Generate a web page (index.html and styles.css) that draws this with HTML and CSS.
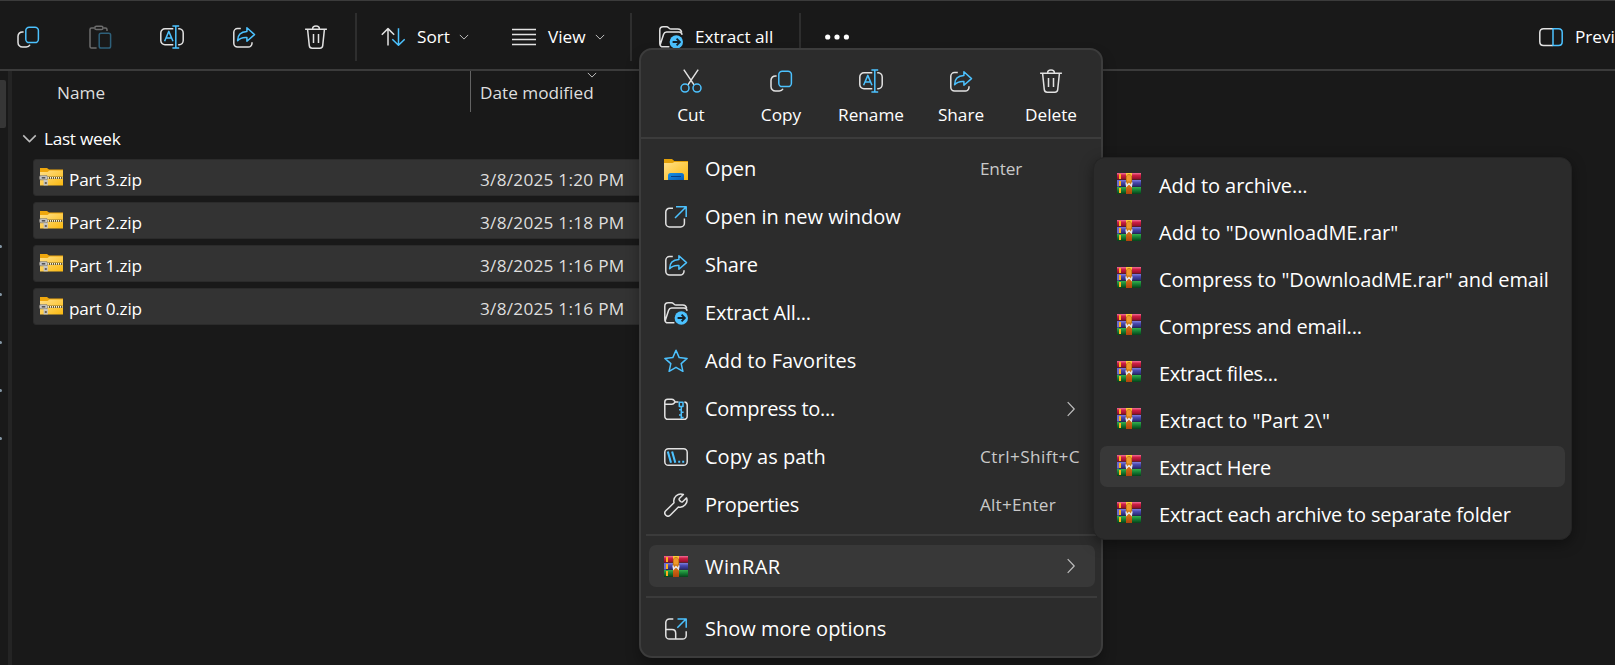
FILE: index.html
```
<!DOCTYPE html>
<html lang="en">
<head>
<meta charset="utf-8">
<title>File Explorer</title>
<link rel="stylesheet" href="styles.css">
</head>
<body>
<svg class="defs" aria-hidden="true">
  <defs>
    <linearGradient id="gYellow" x1="0" y1="0" x2="1" y2="1"><stop offset="0" stop-color="#ffe08a"/><stop offset="1" stop-color="#fbb90f"/></linearGradient>
    <linearGradient id="gBlue" x1="0" y1="0" x2="1" y2="1"><stop offset="0" stop-color="#1590e6"/><stop offset="1" stop-color="#0a5cb8"/></linearGradient>
    <linearGradient id="gRed" x1="0" y1="0" x2="0" y2="1"><stop offset="0" stop-color="#f0709a"/><stop offset=".35" stop-color="#cf1f45"/><stop offset="1" stop-color="#8a0c28"/></linearGradient>
    <linearGradient id="gPurple" x1="0" y1="0" x2="0" y2="1"><stop offset="0" stop-color="#7f7fe0"/><stop offset=".4" stop-color="#4848ac"/><stop offset="1" stop-color="#26266c"/></linearGradient>
    <linearGradient id="gGreen" x1="0" y1="0" x2="0" y2="1"><stop offset="0" stop-color="#35b04c"/><stop offset=".45" stop-color="#168034"/><stop offset="1" stop-color="#07401a"/></linearGradient>
    <linearGradient id="gStrap" x1="0" y1="0" x2="0" y2="1"><stop offset="0" stop-color="#ffcf3a"/><stop offset=".45" stop-color="#e0801a"/><stop offset="1" stop-color="#b0440c"/></linearGradient>
  </defs>
  <symbol id="copy" viewBox="0 0 24 24">
    <path class="w" d="M7.6 6.9H6.5A4.4 4.4 0 0 0 2 11.3V17.5A4.4 4.4 0 0 0 6.5 22H10.2C12 22 13.3 21.3 14 19.8"/>
    <rect class="b" x="9.8" y="2.2" width="12.6" height="15.4" rx="3.4"/>
  </symbol>
  <symbol id="paste" viewBox="0 0 24 24">
    <path class="w" d="M6.4 3H3.5Q2 3 2 4.6V21.4Q2 23 3.6 23H8.6M15.4 3H17.4Q19 3 19 4.6V6"/>
    <rect class="w" x="6.8" y="1.3" width="8.2" height="3.3" rx="1.6"/>
    <rect class="b" x="11.2" y="8.2" width="11.4" height="14.8" rx="1.8"/>
  </symbol>
  <symbol id="rename" viewBox="0 0 24 24">
    <path class="w" d="M13.3 3.7H5A4.2 4.2 0 0 0 .8 7.9V15.5A4.2 4.2 0 0 0 5 19.7H13.3M18.2 3.7H19.2A4.2 4.2 0 0 1 23.2 7.9V15.5A4.2 4.2 0 0 1 19.2 19.7H18.2"/>
    <path class="b" d="M4.6 16.2L8.8 6.4L13 16.2M6 12.9H11.6M15.8 1V23M12.4 .9H19.2M12.4 23.1H19.2"/>
  </symbol>
  <symbol id="share" viewBox="0 0 24 24">
    <path class="w" d="M8.8 3.6H5.5A3.7 3.7 0 0 0 1.8 7.3V18.3A3.7 3.7 0 0 0 5.5 22H16.2A3.7 3.7 0 0 0 20 18.3V17.2"/>
    <path class="b" d="M14.9 2.8V6.6C9 6.8 5.6 10.1 5.6 15.8C8 12.9 11 12.2 14.9 12.5V16.3L22.5 9.6Z"/>
  </symbol>
  <symbol id="trash" viewBox="0 0 24 24">
    <path class="w" d="M1.1 4.3H22.9M8.6 4C8.6 2 10 1 12 1S15.4 2 15.4 4M3.6 4.5L5.3 20.7Q5.6 23.2 8.1 23.2H15.9Q18.4 23.2 18.7 20.7L20.4 4.5M9.5 9V18M14.5 9V18"/>
  </symbol>
  <symbol id="cut" viewBox="0 0 24 24">
    <path class="w" d="M4.8 .6L15.1 15.8M19.2 .6L8.9 15.8"/>
    <circle class="b" cx="6" cy="19.1" r="4"/><circle class="b" cx="18" cy="19.1" r="4"/>
  </symbol>
  <symbol id="sort" viewBox="0 0 24 24">
    <path class="w" d="M7 20.5V3.6M.8 9.8L7 3.6L13.2 9.8"/>
    <path class="b" d="M17.5 3.3V20.2M11.3 14.2L17.5 20.3L23.7 14.2"/>
  </symbol>
  <symbol id="view" viewBox="0 0 24 24"><path class="w" d="M0 4.5H24M0 9.5H24M0 14.5H24M0 19.5H24"/></symbol>
  <symbol id="extract" viewBox="0 0 24 24">
    <path class="w" d="M10.4 21.8H4.2Q.8 21.8 .8 18.4V5.2Q.8 1.8 4.2 1.8H7.5C9.7 1.8 10 4 12 4H18.8Q22 4 22.7 7.4M1.2 19.8L4.6 9.2Q5.3 7 7.6 7H20Q22.3 7 23.2 9.8"/>
    <circle cx="17.3" cy="17" r="6.7" fill="#4cc2ff"/>
    <path d="M13.6 17H20.8M17.6 13.7L20.9 17L17.6 20.3" fill="none" stroke="#16222b" stroke-width="1.8"/>
  </symbol>
  <symbol id="preview" viewBox="0 0 24 24">
    <path class="w" d="M14 3.8H4.6Q.8 3.8 .8 7.6V16.7Q.8 20.5 4.6 20.5H14"/>
    <path class="b" d="M14 3.8H19.4Q23.2 3.8 23.2 7.6V16.7Q23.2 20.5 19.4 20.5H14Z"/>
  </symbol>
  <symbol id="dots" viewBox="0 0 24 24"><g fill="#fff"><circle cx="2.7" cy="12" r="2.6"/><circle cx="12" cy="12" r="2.6"/><circle cx="21.4" cy="12" r="2.6"/></g></symbol>
  <symbol id="folder" viewBox="0 0 24 24">
    <path d="M0 2H8L10.3 4H24V10H0Z" fill="#e3a008"/>
    <path d="M0 6H8.5L10.5 5H24V23H0Z" fill="url(#gYellow)"/>
    <path d="M4 23V18.5Q4 16 6.5 16H17.5Q20 16 20 18.5V23Z" fill="url(#gBlue)"/>
    <path d="M7 19.5H17" stroke="#083f86"/>
  </symbol>
  <symbol id="window" viewBox="0 0 24 24">
    <path class="w" d="M9 3.3H5.5A3.7 3.7 0 0 0 1.8 7V18.2A3.7 3.7 0 0 0 5.5 21.9H16.7A3.7 3.7 0 0 0 20.4 18.2V13.5"/>
    <path class="b" d="M11 13L22 2M12 1.8H22.2V12"/>
  </symbol>
  <symbol id="more" viewBox="0 0 24 24">
    <path class="w" d="M9.3 1.9H5.5A3.7 3.7 0 0 0 1.8 5.6V18.4A3.7 3.7 0 0 0 5.5 22.1H18.5A3.7 3.7 0 0 0 22.2 18.4V14.2M1.8 12.5H8Q11.7 12.5 11.7 16.2V22"/>
    <path class="b" d="M13.3 10.7L22 2M13.5 1.9H22.2V10.8"/>
  </symbol>
  <symbol id="star" viewBox="0 0 24 24"><path class="b" d="M12 1.3L15.2 8.6L23.1 9.4L17.2 14.6L18.9 22.3L12 18.3L5.1 22.3L6.8 14.6L.9 9.4L8.8 8.6Z"/></symbol>
  <symbol id="compress" viewBox="0 0 24 24">
    <path class="w" d="M14.5 5H11.3L9.6 2.9Q8.9 2.2 7.8 2.2H3.6Q.8 2.2 .8 5V18.9Q.8 22.3 4.2 22.3H19.8Q23.2 22.3 23.2 18.9V8Q23.2 5.2 20.4 5M.8 7.3H8Q9.2 7.3 11.3 5"/>
    <path class="b" d="M15.3 5.2H19V9.6H15.3ZM17.3 9.8V22M17.3 12.7H15M17.3 15.3H19.6M17.3 18H15M17.3 20.5H19.6"/>
  </symbol>
  <symbol id="path" viewBox="0 0 24 24">
    <rect class="w" x=".8" y="3.7" width="22.4" height="16.6" rx="3.6"/>
    <path class="b heavy" d="M3.8 6.5L7 17.8M8.1 6.5L11.3 17.8M14.2 16.8H16.2M18.2 16.8H20.2"/>
  </symbol>
  <symbol id="wrench" viewBox="0 0 24 24">
    <path class="w" d="M19.4 1.5A7 7 0 0 0 10 9.7L1.8 17.8A3.1 3.1 0 0 0 6.2 22.2L14.4 14A7 7 0 0 0 22.6 4.9L18.7 8.7Q17.7 9.5 16.6 8.5L15.5 7.4Q14.6 6.3 15.6 5.3Z"/>
  </symbol>
  <symbol id="rar" viewBox="0 0 24 24">
    <rect x="0" y="2" width="24" height="6.5" fill="url(#gRed)"/>
    <rect x="1" y="9" width="23" height="6.6" fill="url(#gPurple)"/><path d="M0 9H2V15.6H0Z" fill="#6a6ad0"/>
    <rect x="0" y="16" width="24" height="7" fill="url(#gGreen)"/>
    <path d="M3 3V8M3 10V15M3 17V22" stroke="#ffb01e" stroke-width="2"/>
    <rect x="9" y="2" width="6" height="21" fill="url(#gStrap)"/>
    <path d="M9.4 5Q12 1.9 14.6 5V11H9.4Z" fill="#f0982a" stroke="#a8650c" stroke-width=".6"/>
    <path d="M9 11.5L9.6 15L12 12.5L14.4 15L15 11.5" fill="none" stroke="#e6e6e6" stroke-width="1.4"/>
  </symbol>
  <symbol id="zip" viewBox="0 0 24 18">
    <path d="M1 0H8L10 1.5H24V6H1Z" fill="#efa70d"/>
    <path d="M1 4H8.5L10.5 2.5H24V17.5H1Z" fill="url(#gYellow)"/>
    <path d="M9 9.8H23.5" stroke="#6d5b29" stroke-width="2.4"/><path d="M9 9.8H23.5" stroke="#f7f2df" stroke-width="1.7" stroke-dasharray="1 1"/>
    <path d="M1 7.7H8Q9.5 9.7 8 11.8H1Q-.3 9.7 1 7.7Z" fill="#cbcbcb" stroke="#77736b" stroke-width=".7"/><path d="M2.7 9.8H6.3" stroke="#555" stroke-width="1.6"/>
    <path d="M4.6 12H8.8V17.4H4.6Z" fill="#c4c4c4"/><path d="M5.8 15H7.8" stroke="#665b48" stroke-width="1.8"/>
  </symbol>
  <symbol id="down" viewBox="0 0 12 12"><path class="c" d="M1 3.5L6 8.5L11 3.5"/></symbol>
  <symbol id="right" viewBox="0 0 8 16"><path class="c" d="M.7 1.2L7.2 8L.7 14.8"/></symbol>
</svg>

<div class="explorer">
  <header class="toolbar">
    <div class="actions">
      <svg class="icon"><use href="#copy"/></svg>
      <svg class="icon disabled"><use href="#paste"/></svg>
      <svg class="icon"><use href="#rename"/></svg>
      <svg class="icon"><use href="#share"/></svg>
      <svg class="icon"><use href="#trash"/></svg>
    </div>
    <div class="group group-sort">
      <svg class="icon"><use href="#sort"/></svg><span class="label l-sort">Sort</span><svg class="chev"><use href="#down"/></svg>
      <svg class="icon icon-view"><use href="#view"/></svg><span class="label l-view">View</span><svg class="chev"><use href="#down"/></svg>
    </div>
    <div class="group group-extract"><svg class="icon"><use href="#extract"/></svg><span class="label">Extract all</span></div>
    <div class="group group-dots"><svg class="icon"><use href="#dots"/></svg></div>
    <div class="preview"><svg class="icon"><use href="#preview"/></svg><span class="label">Preview</span></div>
  </header>

  <div class="body">
    <nav class="rail">
      <div class="thumb"></div>
      <div class="marks"><i></i><i></i><i></i><i></i><i></i></div>
    </nav>
    <main class="files">
      <div class="columns">
        <span class="col-name">Name</span>
        <div class="col-date"><svg class="sort-mark"><use href="#down"/></svg><span>Date modified</span></div>
      </div>
      <div class="heading"><svg class="chev-lg"><use href="#down"/></svg><span class="t3">Last week</span></div>
      <div class="rows">
        <div class="row"><svg class="zip"><use href="#zip"/></svg><span class="name">Part 3.zip</span><span class="date">3/8/2025 1:20 PM</span></div>
        <div class="row"><svg class="zip"><use href="#zip"/></svg><span class="name">Part 2.zip</span><span class="date">3/8/2025 1:18 PM</span></div>
        <div class="row"><svg class="zip"><use href="#zip"/></svg><span class="name">Part 1.zip</span><span class="date">3/8/2025 1:16 PM</span></div>
        <div class="row"><svg class="zip"><use href="#zip"/></svg><span class="name">part 0.zip</span><span class="date">3/8/2025 1:16 PM</span></div>
      </div>
    </main>
  </div>
</div>

<div class="menu">
  <div class="quick">
    <div class="q"><svg class="icon"><use href="#cut"/></svg><span>Cut</span></div>
    <div class="q"><svg class="icon"><use href="#copy"/></svg><span>Copy</span></div>
    <div class="q"><svg class="icon"><use href="#rename"/></svg><span>Rename</span></div>
    <div class="q"><svg class="icon"><use href="#share"/></svg><span>Share</span></div>
    <div class="q"><svg class="icon"><use href="#trash"/></svg><span>Delete</span></div>
  </div>
  <div class="items">
    <div class="item"><svg class="icon"><use href="#folder"/></svg><span>Open</span><kbd class="t2">Enter</kbd></div>
    <div class="item"><svg class="icon"><use href="#window"/></svg><span>Open in new window</span></div>
    <div class="item"><svg class="icon"><use href="#share"/></svg><span class="t2">Share</span></div>
    <div class="item"><svg class="icon"><use href="#extract"/></svg><span class="t2">Extract All...</span></div>
    <div class="item"><svg class="icon"><use href="#star"/></svg><span>Add to Favorites</span></div>
    <div class="item"><svg class="icon"><use href="#compress"/></svg><span class="t3">Compress to...</span><svg class="arrow"><use href="#right"/></svg></div>
    <div class="item"><svg class="icon"><use href="#path"/></svg><span>Copy as path</span><kbd class="wide">Ctrl+Shift+C</kbd></div>
    <div class="item"><svg class="icon"><use href="#wrench"/></svg><span class="t3">Properties</span><kbd class="wide-s">Alt+Enter</kbd></div>
  </div>
  <div class="rule"></div>
  <div class="item active"><svg class="icon"><use href="#rar"/></svg><span class="wide">WinRAR</span><svg class="arrow"><use href="#right"/></svg></div>
  <div class="rule"></div>
  <div class="item last"><svg class="icon"><use href="#more"/></svg><span>Show more options</span></div>
</div>

<div class="submenu">
  <div class="sub"><svg class="icon"><use href="#rar"/></svg><span class="t1">Add to archive...</span></div>
  <div class="sub"><svg class="icon"><use href="#rar"/></svg><span>Add to "DownloadME.rar"</span></div>
  <div class="sub"><svg class="icon"><use href="#rar"/></svg><span class="t1">Compress to "DownloadME.rar" and email</span></div>
  <div class="sub"><svg class="icon"><use href="#rar"/></svg><span class="t2">Compress and email...</span></div>
  <div class="sub"><svg class="icon"><use href="#rar"/></svg><span class="t3">Extract files...</span></div>
  <div class="sub"><svg class="icon"><use href="#rar"/></svg><span class="t1">Extract to "Part 2\"</span></div>
  <div class="sub active"><svg class="icon"><use href="#rar"/></svg><span class="t3">Extract Here</span></div>
  <div class="sub"><svg class="icon"><use href="#rar"/></svg><span class="t2">Extract each archive to separate folder</span></div>
</div>
</body>
</html>
```
FILE: styles.css
```
* { box-sizing: border-box; }
body { margin: 0; width: 1615px; height: 665px; overflow: hidden; background: #191919; color: #fff; font: 17.2px/24px "Open Sans", "Noto Sans", sans-serif; white-space: nowrap; }
svg { display: block; flex: none; overflow: visible; }
.defs { position: absolute; width: 0; height: 0; }
.w, .b, .c { fill: none; stroke-width: 1.5; stroke-linejoin: round; }
.w { stroke: #e2e2e2; }
.b { stroke: #4cc2ff; }
.c { stroke: #bdbdbd; stroke-width: 1.2; }
.heavy { stroke-width: 2.1; }
.icon { width: 24px; height: 24px; }
.disabled { opacity: .42; }

/* Tracking steps for labels */
.t1 { letter-spacing: -.08px; }
.t2 { letter-spacing: -.18px; }
.t3 { letter-spacing: -.28px; }
.wide { letter-spacing: .42px; }
.wide-s { letter-spacing: .2px; }

.explorer { display: flex; flex-direction: column; height: 665px; }
.toolbar { display: flex; align-items: center; height: 71px; border-top: 1px solid #3b3b3b; border-bottom: 2px solid #3b3b3b; padding: 3px 0 0 16px; }
.toolbar > * { flex: none; }
.actions { display: flex; gap: 48px; width: 339px; }
.group { display: flex; align-items: center; height: 48px; border-left: 2px solid #2e2e2e; }
.group-sort { width: 275px; padding-left: 24px; }
.group-extract { width: 169px; padding-left: 27px; }
.group-dots { padding-left: 24px; }
.label { margin-left: 12px; padding-top: 1px; }
.l-sort { width: 42px; }
.l-view { width: 47px; }
.chev { width: 10px; height: 10px; }
.icon-view { margin-left: 43px; }
.preview { display: flex; align-items: center; margin-left: 690px; }

.body { display: flex; flex: 1; }
.rail { width: 12px; border-right: 4px solid #242424; padding-top: 9px; }
.thumb { width: 6px; height: 48px; background: #363636; border-radius: 0 2px 2px 0; }
.marks { display: flex; flex-direction: column; gap: 45px; padding-top: 117px; }
.marks i { width: 2px; height: 3px; background: #8496a4; border-radius: 0 2px 2px 0; }
.files { flex: 1; }
.columns { display: flex; height: 41px; color: #dedede; }
.col-name { width: 458px; padding: 10px 0 0 45px; }
.col-date { border-left: 1px solid #636363; padding-left: 9px; }
.sort-mark { width: 12px; height: 10px; margin: -1px 0 1px 106px; }
.heading { display: flex; align-items: center; height: 47px; padding: 6px 0 0 10px; }
.chev-lg { width: 15px; height: 15px; margin-right: 7px; }
.rows { display: grid; gap: 6px; padding-left: 21px; }
.row { display: flex; align-items: center; width: 700px; height: 37px; padding-left: 5px; background: #333; border: 1px solid #2b2b2b; border-radius: 3px; }
.zip { width: 24px; height: 18px; margin-top: -1px; }
.name { width: 417px; padding: 4px 0 0 6px; letter-spacing: -.2px; }
.date { flex: none; color: #dedede; padding-top: 4px; letter-spacing: .26px; }
.row > .name { flex: none; }

.menu { position: absolute; left: 639px; top: 48px; width: 464px; height: 610px; padding-left: 1px; background: #2c2c2c; border: 2px solid #3c3c3c; border-radius: 13px; box-shadow: 0 8px 14px rgba(0,0,0,.3); }
.quick { display: flex; margin-left: -1px; padding: 19px 4px 0 5px; height: 89px; border-bottom: 2px solid #3c3c3c; }
.q { display: flex; flex-direction: column; align-items: center; gap: 10px; width: 90px; }
.items { padding-top: 6px; }
.item { display: flex; align-items: center; height: 48px; margin: 0 6px 0 7px; padding-left: 15px; font-size: 20px; }
.items .icon { margin-top: -1px; }
.item > span { width: 275px; margin-left: 17px; }
kbd { font: inherit; font-size: 17.2px; color: #c9c9c9; }
.arrow { width: 8px; height: 16px; margin-left: 87px; }
.items .arrow { margin-top: -1px; }
.rule { height: 2px; margin: 5px 4px 0; background: #3b3b3b; }
.menu > .active { height: 42px; margin-top: 9px; margin-bottom: 9px; background: #383838; border-radius: 7px; }
.active > span { padding-top: 1px; }
.menu > .active + .rule { margin-top: 0; }
.last { margin-top: 7px; }

.submenu { position: absolute; left: 1093px; top: 157px; width: 479px; height: 383px; padding: 6px; display: grid; align-content: start; gap: 6px; background: #2b2b2b; border: 1px solid #242424; border-radius: 12px; box-shadow: 0 4px 14px rgba(0,0,0,.4); }
.sub { display: flex; align-items: center; height: 41px; padding-left: 17px; border-radius: 7px; font-size: 20px; }
.sub .icon { margin-top: -3px; }
.sub span { margin-left: 18px; padding-top: 2px; }
.submenu .active { background: #383838; }
```
